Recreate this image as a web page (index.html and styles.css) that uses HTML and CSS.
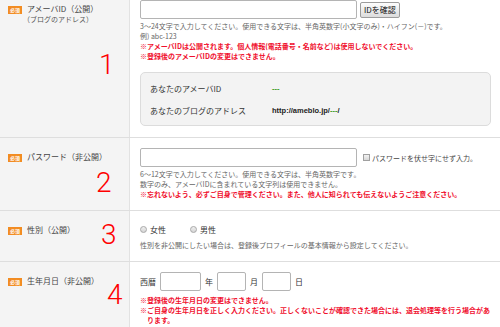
FILE: index.html
```html
<!DOCTYPE html>
<html lang="ja">

<head>
    <meta charset="UTF-8">
    <meta name="viewport" content="width=device-width, initial-scale=1.0">
    <title>会員登録</title>
    <link rel="stylesheet" href="styles.css">
</head>

<body>
    <div class="form">
        <div class="row">
            <div class="label">
                <p class="label-main"><span class="req">必須</span>アメーバID（公開）</p>
                <p class="label-sub">（ブログのアドレス）</p>
                <span class="mark mark1">1</span>
            </div>
            <div class="field">
                <div class="line">
                    <input class="text text-long" type="text">
                    <button class="check-btn" type="button">IDを確認</button>
                </div>
                <p class="note">3～24文字で入力してください。使用できる文字は、半角英数字(小文字のみ)・ハイフン(－)です。<br>例) abc-123</p>
                <p class="warn">※アメーバIDは公開されます。個人情報(電話番号・名前など)は使用しないでください。<br>※登録後のアメーバIDの変更はできません。</p>
                <div class="preview">
                    <div class="preview-row">
                        <span class="preview-key">あなたのアメーバID</span>
                        <span class="preview-val green">---</span>
                    </div>
                    <div class="preview-row">
                        <span class="preview-key">あなたのブログのアドレス</span>
                        <span class="preview-val url">http://ameblo.jp/<span class="green">---</span>/</span>
                    </div>
                </div>
            </div>
        </div>

        <div class="row">
            <div class="label">
                <p class="label-main"><span class="req">必須</span>パスワード（非公開）</p>
                <span class="mark mark2">2</span>
            </div>
            <div class="field">
                <div class="line">
                    <input class="text text-long" type="password">
                    <label class="show-pass"><input class="box" type="checkbox">パスワードを伏せ字にせず入力。</label>
                </div>
                <p class="note">6～12文字で入力してください。使用できる文字は、半角英数字です。<br>数字のみ、アメーバIDに含まれている文字列は使用できません。</p>
                <p class="warn">※忘れないよう、必ずご自身で管理ください。また、他人に知られても伝えないようご注意ください。</p>
            </div>
        </div>

        <div class="row">
            <div class="label">
                <p class="label-main"><span class="req">必須</span>性別（公開）</p>
                <span class="mark mark3">3</span>
            </div>
            <div class="field">
                <div class="line radios">
                    <label class="choice"><input class="dot" type="radio" name="sex">女性</label>
                    <label class="choice"><input class="dot" type="radio" name="sex">男性</label>
                </div>
                <p class="note note-gap">性別を非公開にしたい場合は、登録後プロフィールの基本情報から設定してください。</p>
            </div>
        </div>

        <div class="row">
            <div class="label">
                <p class="label-main"><span class="req">必須</span>生年月日（非公開）</p>
                <span class="mark mark4">4</span>
            </div>
            <div class="field">
                <div class="line date">
                    <span>西暦</span>
                    <input class="text text-year" type="text">
                    <span>年</span>
                    <input class="text text-day" type="text">
                    <span>月</span>
                    <input class="text text-day" type="text">
                    <span>日</span>
                </div>
                <p class="warn warn-gap">※登録後の生年月日の変更はできません。</p>
                <p class="warn hang">※ご自身の生年月日を正しく入力ください。正しくないことが確認できた場合には、退会処理等を行う場合があります。</p>
            </div>
        </div>
    </div>
</body>

</html>
```

FILE: styles.css
```css
* {
    margin: 0;
    padding: 0;
    box-sizing: border-box;
}

body {
    font-family: "Noto Sans CJK JP", sans-serif;
    color: #333;
    background: #fff;
}

.form {
    margin-top: -10px;
}

.row {
    display: flex;
    border-bottom: 1px solid #dedede;
}

.label {
    position: relative;
    width: 130px;
    flex-shrink: 0;
    background: #f4f4f4;
    border-right: 1px solid #e2e2e2;
    padding: 13px 0 0 8px;
}

.label-main {
    font-size: 8px;
    line-height: 11px;
    color: #444;
    white-space: nowrap;
}

.label-sub {
    font-size: 7px;
    line-height: 10px;
    color: #555;
    padding-left: 15px;
}

.req {
    display: inline-block;
    width: 14px;
    height: 8px;
    margin-right: 5px;
    background: #f28c22;
    color: #fff;
    font-size: 5px;
    line-height: 8px;
    text-align: center;
    vertical-align: 0;
    font-weight: bold;
}

.mark {
    position: absolute;
    font-family: Roboto, "Liberation Sans", sans-serif;
    font-weight: 300;
    font-size: 28px;
    line-height: 28px;
    color: #ff0000;
}

.mark1 {
    left: 99px;
    top: 61px;
}

.mark2 {
    left: 96px;
    top: 31px;
}

.mark3 {
    left: 101px;
    top: 10px;
}

.mark4 {
    left: 107px;
    top: 19px;
}

.field {
    flex: 1;
    padding: 10px 9px 11px 10px;
}

.line {
    display: flex;
    align-items: center;
    gap: 3px;
    font-size: 8px;
}

.text {
    height: 19px;
    border: 1px solid #b4b4b4;
    border-radius: 2px;
    background: #fff;
}

.text-long {
    width: 217px;
}

.text-year {
    width: 41px;
}

.text-day {
    width: 29px;
}

.check-btn {
    height: 16px;
    padding: 0 3px;
    font-family: "Noto Sans CJK JP", sans-serif;
    font-size: 8px;
    color: #111;
    border: 1px solid #9c9c9c;
    border-radius: 2px;
    background: linear-gradient(#fdfdfd, #dcdcdc);
}

.show-pass {
    display: flex;
    align-items: center;
    margin-left: 3px;
    font-size: 7px;
    color: #444;
}

.box {
    appearance: none;
    width: 7px;
    height: 7px;
    margin-right: 2px;
    border: 1px solid #a0a0a0;
    background: linear-gradient(#f2f2f2, #d8d8d8);
}

.radios {
    height: 16px;
    gap: 24px;
}

.choice {
    display: flex;
    align-items: center;
    color: #333;
}

.dot {
    appearance: none;
    width: 7px;
    height: 7px;
    margin-right: 3px;
    border: 1px solid #a8a8a8;
    border-radius: 50%;
    background: linear-gradient(#f0f0f0, #d4d4d4);
}

.date {
    gap: 4px;
}

.note {
    margin-top: 2px;
    font-size: 7px;
    line-height: 10px;
    color: #666;
    white-space: nowrap;
}

.note-gap {
    margin-top: 3px;
}

.warn {
    font-size: 7px;
    line-height: 10px;
    font-weight: bold;
    color: #f0102e;
}

.warn-gap {
    margin-top: 4px;
}

.hang {
    padding-left: 7px;
    text-indent: -7px;
}

.preview {
    margin-top: 11px;
    padding: 4px 0 4px 9px;
    border: 1px solid #dcdcdc;
    border-radius: 5px;
    background: #f3f3f3;
}

.preview-row {
    display: flex;
    align-items: center;
    height: 22px;
    font-size: 8px;
}

.preview-key {
    width: 122px;
    color: #333;
}

.preview-val {
    font-family: "Liberation Sans", sans-serif;
    font-weight: bold;
    font-size: 7.5px;
}

.green {
    color: #3a9a1a;
}

.url {
    color: #222;
}
```
